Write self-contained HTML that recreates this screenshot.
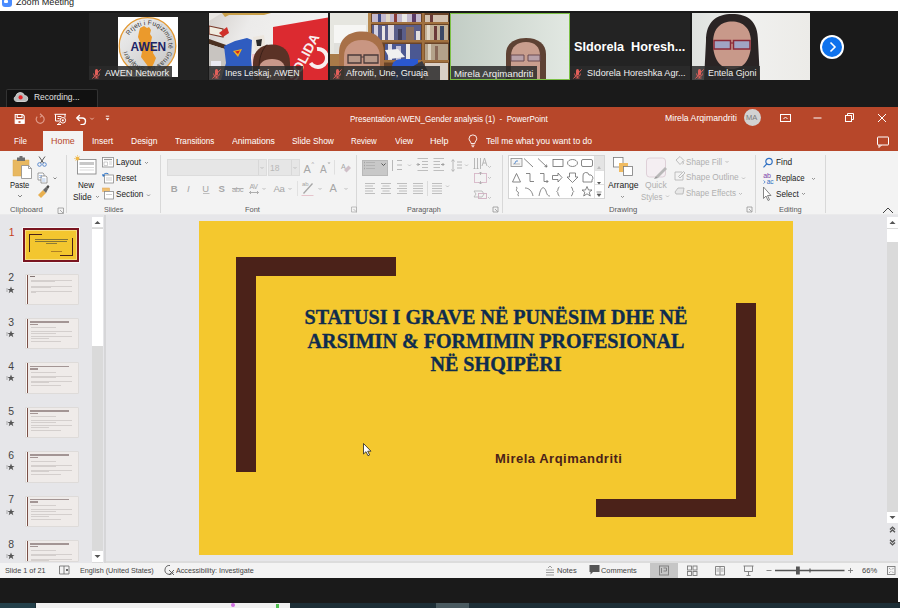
<!DOCTYPE html>
<html><head><meta charset="utf-8">
<style>
*{margin:0;padding:0;box-sizing:border-box}
html,body{width:900px;height:608px;overflow:hidden;background:#1a1a1a;font-family:"Liberation Sans",sans-serif}
.a{position:absolute}
.t{position:absolute;white-space:nowrap;line-height:1}
/* zoom */
#ztitle{left:0;top:0;width:900px;height:11px;background:#fff}
#zstrip{left:0;top:11px;width:898px;height:96px;background:#1a1a1a}
#rcol{left:898px;top:0;width:2px;height:602px;background:#fff}
.tile{position:absolute;top:13px;width:119px;height:67px;background:#232323;overflow:hidden}
.lbl{position:absolute;left:0;top:53px;height:14px;background:rgba(42,42,42,.85);color:#f0f0f0;font-size:9px;line-height:15.4px;padding-left:16px;white-space:nowrap}
.mic{position:absolute;left:2.5px;top:55.5px;width:9px;height:10px}
/* ppt */
#ptitle{left:0;top:107px;width:898px;height:44px;background:#b7472a}
#ribbon{left:0;top:151px;width:898px;height:64px;background:#f3f3f3;border-bottom:1.5px solid #eaeaeb}
#main{left:0;top:215px;width:898px;height:348px;background:#e6e6e9}
#status{left:0;top:563px;width:898px;height:15px;background:#f3f3f3}
.tab{position:absolute;top:137.6px;color:#fff;font-size:8.8px;letter-spacing:-0.3px;line-height:1;white-space:nowrap}
.rt{position:absolute;color:#222;font-size:9px;white-space:nowrap;line-height:1}
.dis{color:#a6a6a6}
.gl{position:absolute;color:#5a5a5a;font-size:8.5px;white-space:nowrap;line-height:1}
.sep{position:absolute;top:155px;width:1px;height:58px;background:#d8d8d8}
.st{position:absolute;top:567px;color:#444;font-size:8.5px;white-space:nowrap;line-height:1}
</style></head><body>
<!-- Zoom title -->
<div id="ztitle" class="a"></div>
<div id="zstrip" class="a"></div>
<div id="rcol" class="a"></div>

<!-- Zoom title content -->
<div class="a" style="left:2px;top:-3.3px;width:10.3px;height:10px;border-radius:3px;background:#4a8cff"></div>
<div class="a" style="left:4px;top:0px;width:4px;height:3px;background:#fff;border-radius:1px"></div>
<div class="t" style="left:16px;top:-1.7px;font-size:9.1px;color:#222">Zoom Meeting</div>

<!-- tile 1 AWEN -->
<div class="tile" style="left:89px">
  <svg class="a" style="left:29px;top:4px" width="60" height="60">
   <defs><linearGradient id="sg" x1="0" y1="0" x2="1" y2="1"><stop offset="0" stop-color="#f2f2f2"/><stop offset="0.6" stop-color="#d6d6d6"/><stop offset="1" stop-color="#c4c4c4"/></linearGradient>
   <path id="ring" d="M11.3 18.5 A21 21 0 1 1 47.7 39.5 A21 21 0 1 1 11.3 18.5"/></defs>
   <rect width="60" height="60" fill="#fff"/>
   <circle cx="29.5" cy="29" r="28.3" fill="url(#sg)" stroke="#e39a35" stroke-width="1.3"/>
   <path d="M22 11 L26 9 L29 11 L31 10 L33 13 L32 17 L34 20 L33 25 L36 30 L35 36 L38 41 L36 46 L34 50 L31 52 L29 48 L26 44 L23 40 L24 35 L21 30 L22 25 L20 20 L21 15Z" fill="#eb9a2c"/>
   <text font-size="6.6" fill="#333" font-family="Liberation Sans" letter-spacing="0.15"><textPath href="#ring" startOffset="0%">Rrjeti i Fuqizimit të Gruas në Shqipëri</textPath></text>
   <text x="12.5" y="33.5" font-size="11.9" font-weight="bold" fill="#1c2466" font-family="Liberation Sans">AWEN</text>
  </svg>
  <div class="lbl" style="width:83px;font-size:9.3px">AWEN Network</div><svg class="mic" width="9" height="10"><path d="M3 1.5 A1.5 1.5 0 0 1 6 1.5 V5 A1.5 1.5 0 0 1 3 5Z" fill="#e2605a"/><path d="M1.5 4.5 A3 3 0 0 0 7.5 4.5 M4.5 7.5 V9 M2.5 9 H6.5" fill="none" stroke="#e2605a" stroke-width="0.9"/><path d="M0.5 9.5 L8.5 0.5" stroke="#e2605a" stroke-width="1"/></svg>
</div>
<!-- tile 2 Ines -->
<div class="tile" style="left:209px;background:#e6e4e2">
  <svg class="a" style="left:0;top:0" width="119" height="67">
   <defs><linearGradient id="w2" x1="0" y1="0" x2="1" y2="0.3"><stop offset="0" stop-color="#d4d0cc"/><stop offset="0.35" stop-color="#ecebea"/><stop offset="1" stop-color="#f4f3f2"/></linearGradient></defs>
   <rect width="119" height="67" fill="url(#w2)"/>
   <path d="M13 0 H62 L55 2 H20 L16 4Z" fill="#c9a04a"/>
   <path d="M0 0 H13 L0 8Z" fill="#e8e6e2"/>
   <path d="M0 13 L14 16 V24 L0 21Z" fill="#f0ece0" stroke="#7a3a2a" stroke-width="1.2"/>
   <path d="M10 20 L18 14 L20 20 L14 24Z" fill="#d0302a"/>
   <path d="M0 26 L20 33 L22 38 L0 31Z" fill="#4a3020"/>
   <path d="M0 31 L22 38 V67 H0Z" fill="#c8c4c0"/>
   <path d="M2 48 H12 V55 H2Z" fill="#e8e8f0"/>
   <path d="M15 33 L26 28 L38 25 L43 27 L42 45 L44 67 H12 L17 50 Z" fill="#2f5cc0"/>
   <path d="M24 38 L33 36 L29 44Z" fill="#f0b020"/><path d="M26 38.5 L31 37.5 L29 41Z" fill="#d02020"/>
   <path d="M44 24 L55 22 L57 36 L46 38Z" fill="#ece6de"/><path d="M47 27 L53 26 L52 33 L48 33Z" fill="#2a2a2a"/>
   <rect x="43" y="41" width="9" height="14" fill="#f4c8cc"/>
   <path d="M64 14 L119 4.5 V67 H64Z" fill="#dc2a30"/>
   <g transform="translate(87 69) rotate(-62)" fill="#f8eeee" font-family="Liberation Sans" font-weight="bold" font-size="13.5"><text x="0" y="0">SOLIDA</text></g>
   <path d="M108 36 A9 9 0 1 1 101.5 50" fill="none" stroke="#f8eeee" stroke-width="4"/>
   <path d="M44 67 V50 C44 38 52 31.5 63 31.5 C74 31.5 81 38 81 50 V67Z" fill="#5a3226"/>
   <path d="M50 67 V56 C50 50 55 46 63 46 C71 46 76 50 76 56 V67Z" fill="#c8988a"/>
   <path d="M58 31.5 C52 38 50 46 50 56" fill="none" stroke="#3a2018" stroke-width="1"/>
  </svg>
  <div class="lbl" style="width:94px;font-size:8.75px">Ines Leskaj, AWEN</div><svg class="mic" width="9" height="10"><path d="M3 1.5 A1.5 1.5 0 0 1 6 1.5 V5 A1.5 1.5 0 0 1 3 5Z" fill="#e2605a"/><path d="M1.5 4.5 A3 3 0 0 0 7.5 4.5 M4.5 7.5 V9 M2.5 9 H6.5" fill="none" stroke="#e2605a" stroke-width="0.9"/><path d="M0.5 9.5 L8.5 0.5" stroke="#e2605a" stroke-width="1"/></svg>
</div>
<!-- tile 3 Afroviti -->
<div class="tile" style="left:330px;background:#7a5a3a">
  <svg class="a" style="left:0;top:0" width="119" height="67">
   <rect width="119" height="67" fill="#8a5a34"/>
   <rect x="0" y="0" width="40" height="67" fill="#e6e6e0"/>
   <rect x="4" y="12" width="32" height="28" fill="#f6f6f4"/><rect x="4" y="30" width="8" height="10" fill="#e0e0dc"/>
   <rect x="0" y="41" width="40" height="12" fill="#a87a48"/><rect x="0" y="53" width="40" height="14" fill="#9a8a70"/>
   <rect x="40" y="0" width="79" height="67" fill="#6a4428"/>
   <rect x="40" y="9" width="79" height="2" fill="#a0703e"/><rect x="40" y="27" width="79" height="2.5" fill="#a0703e"/><rect x="40" y="47" width="79" height="2.5" fill="#a0703e"/>
   <rect x="92" y="0" width="2.5" height="67" fill="#a0703e"/><rect x="38" y="0" width="3" height="67" fill="#b88a50"/>
   <g opacity="0.95">
    <rect x="42" y="1" width="49" height="8" fill="#c8c0d8"/><rect x="48" y="1" width="3" height="8" fill="#3a4a8a"/><rect x="56" y="1" width="4" height="8" fill="#e8e0d0"/><rect x="64" y="1" width="3" height="8" fill="#8a3a3a"/><rect x="72" y="1" width="5" height="8" fill="#f0f0f0"/><rect x="82" y="1" width="4" height="8" fill="#5a3a6a"/>
    <rect x="95" y="2" width="23" height="7" fill="#d8c8b8"/><rect x="100" y="2" width="3" height="7" fill="#6a3a3a"/>
    <rect x="42" y="12" width="49" height="15" fill="#5a6090"/><rect x="44" y="12" width="4" height="15" fill="#d8d8ea"/><rect x="52" y="13" width="3" height="14" fill="#f0eeee"/><rect x="58" y="12" width="6" height="15" fill="#e6e0e8"/><rect x="68" y="16" width="4" height="11" fill="#3a3a5a"/><rect x="76" y="14" width="8" height="13" fill="#8a7060"/><rect x="86" y="18" width="4" height="9" fill="#e8e8e8"/>
    <rect x="95" y="12" width="23" height="15" fill="#c8b8a0"/><rect x="97" y="12" width="3" height="15" fill="#e8e0d0"/><rect x="104" y="13" width="3" height="14" fill="#6a3a3a"/><rect x="110" y="13" width="4" height="14" fill="#3a4a6a"/>
    <rect x="55" y="31" width="36" height="16" fill="#4a5a98"/><rect x="58" y="31" width="4" height="16" fill="#e0e0f0"/><rect x="66" y="33" width="5" height="14" fill="#c8c8e0"/><rect x="76" y="31" width="4" height="16" fill="#f0f0f0"/>
    <rect x="95" y="31" width="23" height="16" fill="#b8a890"/><rect x="98" y="31" width="3" height="16" fill="#e0d8c8"/><rect x="105" y="33" width="3" height="14" fill="#8a6a5a"/>
    <rect x="95" y="50" width="23" height="17" fill="#e0d8d0"/>
   </g>
   <path d="M62 67 V54 C62 49 66 46 72 46 H88 V67Z" fill="#2a58d0"/>
   <path d="M80 55 L92 48 L98 58 L90 67 H80Z" fill="#3a3a40"/>
   <path d="M55 37 L68 36 L75 44 L60 46Z" fill="#f0f0f0"/>
   <path d="M9 67 V40 C9 26 18 18.5 32 18.5 C46 18.5 54 26 54 40 V58 L50 67Z" fill="#a87048"/>
   <path d="M14 67 V44 C14 33 21 27 32 27 C43 27 50 33 50 44 V67Z" fill="#c99682"/>
   <path d="M18 42 H31 V50 H18Z M34 42 H48 V50 H34Z" fill="#b89888" stroke="#4a3a3a" stroke-width="1.3"/><path d="M31 44 H34" stroke="#4a3a3a" stroke-width="1"/>
  </svg>
  <div class="lbl" style="width:110px;font-size:9.15px">Afroviti, Une, Gruaja</div><svg class="mic" width="9" height="10"><path d="M3 1.5 A1.5 1.5 0 0 1 6 1.5 V5 A1.5 1.5 0 0 1 3 5Z" fill="#e2605a"/><path d="M1.5 4.5 A3 3 0 0 0 7.5 4.5 M4.5 7.5 V9 M2.5 9 H6.5" fill="none" stroke="#e2605a" stroke-width="0.9"/><path d="M0.5 9.5 L8.5 0.5" stroke="#e2605a" stroke-width="1"/></svg>
</div>
<!-- tile 4 Mirela -->
<div class="tile" style="left:450px;width:120px;background:#cfd8d0;border:1px solid #7cc146">
  <svg class="a" style="left:0;top:0" width="118" height="65">
   <defs><linearGradient id="w4" x1="0" y1="0" x2="1" y2="0"><stop offset="0" stop-color="#c2cdc5"/><stop offset="0.55" stop-color="#d4dcd5"/><stop offset="1" stop-color="#e2e8e2"/></linearGradient></defs>
   <rect width="118" height="65" fill="url(#w4)"/>
   <path d="M55 65 V40 C55 30 63 24 75 24 C87 24 95 30 95 40 V65Z" fill="#5e4234"/>
   <path d="M60 65 V42 C60 33 66 28 75 28 C84 28 89 33 89 42 V65Z" fill="#c99e8e"/>
   <path d="M60 41 H73 V47 H60Z M77 41 H89 V47 H77Z" fill="#b8a0a8" stroke="#6a4a50" stroke-width="1"/>
  </svg>
  <div class="lbl" style="width:86px;padding-left:3px;top:52px;font-size:9.6px">Mirela Arqimandriti</div>
</div>
<!-- tile 5 Sidorela -->
<div class="tile" style="left:570px;width:120px">
  <div class="t" style="left:4px;top:27.5px;font-size:12.7px;font-weight:bold;color:#fff">SIdorela&nbsp; Horesh...</div>
  <div class="lbl" style="width:120px;background:#2a2a2a;padding-left:17px;font-size:9.1px">SIdorela Horeshka Agr...</div><svg class="mic" width="9" height="10"><path d="M3 1.5 A1.5 1.5 0 0 1 6 1.5 V5 A1.5 1.5 0 0 1 3 5Z" fill="#e2605a"/><path d="M1.5 4.5 A3 3 0 0 0 7.5 4.5 M4.5 7.5 V9 M2.5 9 H6.5" fill="none" stroke="#e2605a" stroke-width="0.9"/><path d="M0.5 9.5 L8.5 0.5" stroke="#e2605a" stroke-width="1"/></svg>
</div>
<!-- tile 6 Entela -->
<div class="tile" style="left:692px;width:118px;background:#eeeeec">
  <svg class="a" style="left:0;top:0" width="118" height="67">
   <defs><linearGradient id="w6" x1="0" y1="0" x2="1" y2="0"><stop offset="0" stop-color="#dfe2df"/><stop offset="0.5" stop-color="#f0f0ee"/><stop offset="1" stop-color="#ecebe8"/></linearGradient></defs>
   <rect width="118" height="67" fill="url(#w6)"/>
   <path d="M12 67 L14 28 C14 8 25 1 40 1 C56 1 66 8 66 28 L68 67Z" fill="#2a2424"/>
   <path d="M21 30 C21 15 29 8.5 40 8.5 C51 8.5 59 15 59 30 C59 47 51 56 40 56 C29 56 21 47 21 30Z" fill="#c8998a"/>
   <path d="M22 27.5 H38.5 V36 H22Z M41.5 27.5 H58 V36 H41.5Z" fill="#a0a4c4" stroke="#8a2a38" stroke-width="1.5"/><path d="M38.5 30 H41.5" stroke="#8a2a38" stroke-width="1.2"/>
   <path d="M28 67 C32 62 48 62 60 67Z" fill="#3a4a8a"/>
  </svg>
  <div class="lbl" style="width:68px;font-size:8.9px">Entela Gjoni</div><svg class="mic" width="9" height="10"><path d="M3 1.5 A1.5 1.5 0 0 1 6 1.5 V5 A1.5 1.5 0 0 1 3 5Z" fill="#e2605a"/><path d="M1.5 4.5 A3 3 0 0 0 7.5 4.5 M4.5 7.5 V9 M2.5 9 H6.5" fill="none" stroke="#e2605a" stroke-width="0.9"/><path d="M0.5 9.5 L8.5 0.5" stroke="#e2605a" stroke-width="1"/></svg>
</div>
<!-- next arrow -->
<div class="a" style="left:820px;top:35px;width:24px;height:24px;border-radius:50%;background:#fff"></div>
<div class="a" style="left:822px;top:37px;width:20px;height:20px;border-radius:50%;background:#0e72ed"></div>
<svg class="a" style="left:820px;top:35px" width="24" height="24"><path d="M10.5 7.5 L15 12 L10.5 16.5" fill="none" stroke="#fff" stroke-width="1.6"/></svg>

<!-- recording -->
<div class="a" style="left:6px;top:88.5px;width:92px;height:19px;background:#111;border:1px solid #333;border-bottom:none;border-radius:2px 2px 0 0"></div>
<svg class="a" style="left:13px;top:91px" width="16" height="12"><path d="M3.5 10.5 A2.8 2.8 0 0 1 2.8 5.2 A4.6 4.6 0 0 1 11.6 4.6 A3 3 0 0 1 12.5 10.5Z" fill="#b8bcbc" stroke="#d0d0d0" stroke-width="1"/><circle cx="7.6" cy="6.4" r="2.1" fill="#e8252a"/></svg>
<div class="t" style="left:34.3px;top:92.6px;font-size:9.2px;transform:scaleX(0.92);transform-origin:0 0;color:#e0e0e0">Recording...</div>


<!-- PowerPoint title bar -->
<div id="ptitle" class="a"></div>
<div id="ribbon" class="a"></div>
<div id="main" class="a"></div>
<div id="status" class="a"></div>

<!-- QAT -->
<svg class="a" style="left:13px;top:113px" width="100" height="12">
 <g fill="none" stroke="#fff" stroke-width="1.1">
  <path d="M2.2 1.5 H9.8 L11.2 2.9 V10.2 H2.2 Z"/><path d="M4.2 1.5 V4.5 H9 V1.5"/>
 </g>
 <path d="M2.2 6.3 H11.2 V10.8 H2.2Z" fill="#fff"/><rect x="5.5" y="8.2" width="2" height="1.6" fill="#b7472a"/>
 <g fill="none" stroke="#e09a88" stroke-width="1.2"><path d="M28.5 2.5 A4 4 0 1 1 24.2 3.6"/><path d="M27 0.8 L29 2.6 L27 4.4"/></g>
 <g fill="none" stroke="#fff" stroke-width="1"><path d="M41.5 1.3 H53"/><path d="M42.5 1.3 V8 H46.5"/><path d="M52 1.3 V4.5"/><circle cx="49.8" cy="7.3" r="2.8"/><path d="M45 11.5 L46.8 9.3 M44 11.5 H48"/><path d="M44.5 3.5 H48.5 M44.5 5.5 H46.5"/></g>
 <circle cx="49.8" cy="7.3" r="1.1" fill="#fff"/>
 <g fill="none" stroke="#fff" stroke-width="1.4"><path d="M64.5 5 H69.2 A3.3 3.3 0 0 1 69.2 11.6 H67.5"/><path d="M66.8 2 L63.8 5 L66.8 8"/></g>
 <path d="M77.3 4.8 L79 6.5 L80.7 4.8" fill="none" stroke="#f0c0b0" stroke-width="0.9"/>
 <path d="M92.8 3.2 H96.2" stroke="#fff" stroke-width="0.9"/><path d="M92.6 5.2 L94.5 7.6 L96.4 5.2 Z" fill="#fff"/>
</svg>
<div class="t" style="left:350px;top:115.0px;font-size:8.9px;transform:scaleX(0.904);transform-origin:0 0;color:#fff">Presentation AWEN_Gender analysis (1)&nbsp; -&nbsp; PowerPoint</div>
<div class="t" style="left:665.4px;top:113.5px;font-size:8.9px;transform:scaleX(0.979);transform-origin:0 0;color:#fff">Mirela Arqimandriti</div>
<div class="a" style="left:744px;top:109px;width:17px;height:17px;border-radius:50%;background:#d2d2d2"></div>
<div class="t" style="left:746px;top:114px;font-size:7.5px;color:#7a7a7a">MA</div>
<svg class="a" style="left:775px;top:110px" width="120" height="40">
 <g fill="none" stroke="#fff" stroke-width="1">
  <rect x="5.5" y="4.5" width="10" height="7"/><path d="M8.5 9 L10.5 7 L12.5 9" />
  <path d="M38.5 8 H46.5"/>
  <rect x="70.5" y="5.5" width="6" height="6"/><path d="M72.5 5.5 V3.5 H78.5 V9.5 H76.5"/>
  <path d="M103 4 L111 12 M111 4 L103 12"/>
  <rect x="102.5" y="27" width="11" height="8" rx="0.5"/><path d="M104 35 V37.5 L106.5 35"/>
 </g>
</svg>
<!-- tabs -->
<div class="a" style="left:43px;top:131px;width:40px;height:20px;background:#f3f3f3"></div>
<div class="tab" style="left:14.0px;top:136.8px;font-size:9.2px;letter-spacing:0;transform:scaleX(0.873);transform-origin:0 0">File</div>
<div class="tab" style="left:50.8px;top:136.8px;font-size:9.2px;letter-spacing:0;transform:scaleX(0.969);transform-origin:0 0;color:#b7472a">Home</div>
<div class="tab" style="left:92.0px;top:136.8px;font-size:9.2px;letter-spacing:0;transform:scaleX(0.923);transform-origin:0 0">Insert</div>
<div class="tab" style="left:130.8px;top:136.8px;font-size:9.2px;letter-spacing:0;transform:scaleX(0.925);transform-origin:0 0">Design</div>
<div class="tab" style="left:174.5px;top:136.8px;font-size:9.2px;letter-spacing:0;transform:scaleX(0.884);transform-origin:0 0">Transitions</div>
<div class="tab" style="left:231.5px;top:136.8px;font-size:9.2px;letter-spacing:0;transform:scaleX(0.945);transform-origin:0 0">Animations</div>
<div class="tab" style="left:292.0px;top:136.8px;font-size:9.2px;letter-spacing:0;transform:scaleX(0.912);transform-origin:0 0">Slide Show</div>
<div class="tab" style="left:351.2px;top:136.8px;font-size:9.2px;letter-spacing:0;transform:scaleX(0.851);transform-origin:0 0">Review</div>
<div class="tab" style="left:394.5px;top:136.8px;font-size:9.2px;letter-spacing:0;transform:scaleX(0.922);transform-origin:0 0">View</div>
<div class="tab" style="left:430.0px;top:136.8px;font-size:9.2px;letter-spacing:0;transform:scaleX(0.979);transform-origin:0 0">Help</div>
<svg class="a" style="left:467px;top:134px" width="12" height="14"><g fill="none" stroke="#fff" stroke-width="0.9"><path d="M4 9.5 C4 7.5 2 6.5 2 4.8 A3.9 3.9 0 0 1 9.8 4.8 C9.8 6.5 7.8 7.5 7.8 9.5 Z"/><path d="M4.3 11.2 H7.5 M4.8 12.7 H7"/></g></svg>
<div class="tab" style="left:485.8px;top:136.8px;font-size:9.2px;letter-spacing:0;transform:scaleX(0.936);transform-origin:0 0">Tell me what you want to do</div>



<!-- RIBBON -->
<div class="sep" style="left:66px"></div>
<div class="sep" style="left:160px"></div>
<div class="sep" style="left:356px"></div>
<div class="sep" style="left:502px"></div>
<div class="sep" style="left:755px"></div>
<div class="sep" style="left:825px"></div>
<!-- clipboard -->
<svg class="a" style="left:10px;top:155px" width="56" height="50">
 <path d="M3 5 H19 V21 H3 Z" fill="#e8b860" stroke="#d9a850" stroke-width="0.5"/>
 <path d="M7 2.5 H15 V6 H7 Z" fill="#6e6e6e"/><path d="M9.5 1 H12.5 V3 H9.5Z" fill="#6e6e6e"/>
 <path d="M11.5 10.5 H18.5 L21.5 13.5 V23.5 H11.5 Z" fill="#fff" stroke="#8a8a8a" stroke-width="0.8"/>
 <path d="M18.5 10.5 V13.5 H21.5" fill="none" stroke="#8a8a8a" stroke-width="0.8"/>
 <path d="M8 40 L10 42 L12 40" fill="none" stroke="#6a6a6a" stroke-width="0.8"/>
 <!-- cut -->
 <g fill="none" stroke="#5b8bd0" stroke-width="1"><circle cx="29.5" cy="9.5" r="1.8"/><circle cx="34.5" cy="9.5" r="1.8"/></g>
 <path d="M30.5 8 L35 1.5 M33.5 8 L29 1.5" stroke="#4a4a4a" stroke-width="0.9"/>
 <!-- copy -->
 <path d="M28 18 H33 L34 19 V25 H28Z" fill="#fff" stroke="#7a7a7a" stroke-width="0.7"/>
 <path d="M31 21 H36 L37 22 V28 H31Z" fill="#fff" stroke="#7a7a7a" stroke-width="0.7"/>
 <path d="M29 20.5 H32 M29 22.5 H32 M32 24 H35.5 M32 26 H35.5" stroke="#5b8bd0" stroke-width="0.5"/>
 <path d="M43.5 22.5 L45 24 L46.5 22.5" fill="none" stroke="#6a6a6a" stroke-width="0.8"/>
 <!-- format painter -->
 <path d="M28 40 L33 35 L36 38 L31 43 Z" fill="#e8b050"/><path d="M33 35 L36 32 L38 34 L36 38Z" fill="#6a6a6a"/><path d="M36 32 L38 30 L39.5 31.5 L38 34Z" fill="#4a4a4a"/>
</svg>
<div class="rt" style="left:10.2px;top:181.3px;font-size:8.5px;transform:scaleX(0.888);transform-origin:0 0">Paste</div>
<div class="gl" style="left:10.4px;top:206.2px;font-size:8.1px;transform:scaleX(0.948);transform-origin:0 0">Clipboard</div>
<svg class="a" style="left:57px;top:207px" width="8" height="8"><path d="M1 1 H6.5 V6.5 H1Z M3 3 L6 6" fill="none" stroke="#8a8a8a" stroke-width="0.7"/></svg>
<!-- slides -->
<svg class="a" style="left:74px;top:155px" width="84" height="48">
 <rect x="3.5" y="4.5" width="18.5" height="14.5" fill="#fff" stroke="#8a8a8a" stroke-width="0.9"/>
 <rect x="5.5" y="7" width="14.5" height="3" fill="#c8c8c8"/><path d="M5.5 12.5 H20 M5.5 15 H20" stroke="#d0d0d0" stroke-width="0.8"/>
 <circle cx="3.5" cy="3.5" r="2" fill="#f0b848"/><path d="M3.5 0 V1 M0 3.5 H1 M1 1 L1.7 1.7 M6 1 L5.3 1.7 M1 6 L1.7 5.3" stroke="#f0b848" stroke-width="0.6"/>
 <path d="M22 41 L23.5 42.5 L25 41" fill="none" stroke="#6a6a6a" stroke-width="0.7"/>
 <!-- layout -->
 <rect x="28.5" y="2.5" width="11" height="9.5" fill="#fff" stroke="#8a8a8a" stroke-width="0.8"/><path d="M30 4.5 H38" stroke="#9a9a9a" stroke-width="1.2"/><path d="M30 7 H33.5 V10.5 H30Z M35 7 H38 M35 9 H38" fill="none" stroke="#b0b0b0" stroke-width="0.6"/>
 <path d="M71 7 L72.5 8.5 L74 7" fill="none" stroke="#6a6a6a" stroke-width="0.7"/>
 <!-- reset -->
 <rect x="30.5" y="20" width="9" height="8" fill="#fff" stroke="#8a8a8a" stroke-width="0.8"/><path d="M32 23 H38 M32 25 H38" stroke="#b0b0b0" stroke-width="0.6"/>
 <path d="M29 21 A3.5 3.5 0 0 1 34.5 19" fill="none" stroke="#2e75c8" stroke-width="1"/><path d="M28 19 L29 22 L31 20.5Z" fill="#2e75c8"/>
 <!-- section -->
 <rect x="28.5" y="33" width="7" height="3.5" fill="#f0c070" stroke="#e0a050" stroke-width="0.5"/>
 <rect x="30.5" y="36.5" width="9" height="7.5" fill="#fff" stroke="#8a8a8a" stroke-width="0.8"/><path d="M32 39.5 H38" stroke="#b0b0b0" stroke-width="0.6"/>
 <path d="M73 39.5 L74.5 41 L76 39.5" fill="none" stroke="#6a6a6a" stroke-width="0.7"/>
</svg>
<div class="rt" style="left:78.3px;top:181.4px;font-size:8.5px;transform:scaleX(0.950);transform-origin:0 0">New</div>
<div class="rt" style="left:73.3px;top:192.6px;font-size:8.5px;transform:scaleX(0.983);transform-origin:0 0">Slide</div>
<div class="rt" style="left:115.9px;top:157.9px;font-size:8.5px;transform:scaleX(0.983);transform-origin:0 0">Layout</div>
<div class="rt" style="left:115.9px;top:174.0px;font-size:8.5px;transform:scaleX(0.916);transform-origin:0 0">Reset</div>
<div class="rt" style="left:115.9px;top:190.4px;font-size:8.5px;transform:scaleX(0.965);transform-origin:0 0">Section</div>
<div class="gl" style="left:103.6px;top:206.2px;font-size:8.1px;transform:scaleX(0.875);transform-origin:0 0">Slides</div>
<!-- font -->
<div class="a" style="left:167px;top:159px;width:100px;height:17px;background:#e6e6e6;border:1px solid #dcdcdc"></div>
<div class="a" style="left:258px;top:160px;width:1px;height:15px;background:#d8d8d8"></div>
<div class="a" style="left:268px;top:159px;width:32px;height:17px;background:#e6e6e6;border:1px solid #dcdcdc"></div>
<div class="a" style="left:291px;top:160px;width:1px;height:15px;background:#d8d8d8"></div>
<div class="t dis" style="left:270px;top:164px;font-size:8.5px;color:#b8b8b8">18</div>
<svg class="a" style="left:160px;top:155px" width="200" height="60">
 <g fill="none" stroke="#b0b0b0" stroke-width="0.7"><path d="M100.5 12 L102 13.5 L103.5 12 M133.5 12 L135 13.5 L136.5 12"/></g>
 <g fill="#a6a6a6" font-family="Liberation Sans">
  <text x="143.5" y="17.5" font-size="11">A</text><text x="151.5" y="11" font-size="5.5">^</text>
  <text x="160" y="17.5" font-size="10">A</text><path d="M167.5 7.5 L169 9 L170.5 7.5Z"/>
  <text x="10.8" y="36.6" font-size="9.6" font-weight="bold">B</text>
  <text x="27" y="36.6" font-size="9.6" font-style="italic">I</text>
  <text x="42.3" y="36.6" font-size="9.4">U</text>
  <text x="58.5" y="36.6" font-size="9.6" font-weight="bold">S</text>
  <text x="72" y="36.6" font-size="7.6" letter-spacing="-0.4">abc</text>
  <text x="89.4" y="34.3" font-size="7" letter-spacing="-0.3">AV</text>
  <text x="113.5" y="36.6" font-size="9.6" letter-spacing="-0.3">Aa</text>
  <text x="169.5" y="37" font-size="11">A</text>
  <text x="181" y="14" font-size="7">A</text>
 </g>
 <g fill="none" stroke="#a6a6a6" stroke-width="0.7">
  <path d="M43 38.5 H49.5"/><path d="M72 33.5 H83.5"/><path d="M89.5 37.5 H98.5 M91 36 L89.5 37.5 L91 39 M97 36 L98.5 37.5 L97 39" stroke-width="0.9"/>
  <path d="M102.5 33 L104 34.5 L105.5 33 M128.5 33 L130 34.5 L131.5 33 M158.5 33 L160 34.5 L161.5 33 M184.5 33 L186 34.5 L187.5 33"/>
  <path d="M143.5 38.5 L152.5 28.5" stroke-width="1.3"/><path d="M141.5 40.5 H153.5" stroke="#e6c4cc" stroke-width="1"/>
  <path d="M174.5 5 V19.5" stroke="#d6d6d6"/><path d="M137.5 26 V41" stroke="#d8d8d8"/>
  <path d="M191.5 52 H196.5 V57 H191.5Z M193.5 54 L196 56.5"/>
 </g>
 <path d="M184 15 L188.5 10.5 L191 13 L186.5 17.5Z" fill="#d0c0c8"/>
 <text x="142" y="31" font-size="6" fill="#a6a6a6" font-family="Liberation Sans">ab</text>
</svg>
<div class="gl" style="left:245.3px;top:206.2px;font-size:8.1px;transform:scaleX(0.922);transform-origin:0 0">Font</div>
<!-- paragraph -->
<div class="a" style="left:362px;top:160px;width:26px;height:16px;background:#c8c8c8;border:1px solid #b8b8b8"></div>
<svg class="a" style="left:356px;top:155px" width="146" height="60">
 <g fill="none" stroke="#a0a0a0" stroke-width="0.9">
  <path d="M10 7.5 H19 M10 10.5 H19 M10 13.5 H19" stroke="#b0b0b0"/>
  <path d="M8 7.5 H8.8 M8 10.5 H8.8 M8 13.5 H8.8" stroke="#9a9a9a" stroke-width="1.5"/>
  <path d="M25.5 8.5 L27.5 10.5 L29.5 8.5" stroke="#555" stroke-width="1"/>
  <path d="M41 5.5 H46 M41 10 H46 M41 14.5 H46 M36.5 5 V16" stroke="#b0b0b0"/>
  <path d="M52 9.5 L53.5 11 L55 9.5 M109 9.5 L110.5 11 L112 9.5 M132 11 L133.5 12.5 L135 11 M132 22 L133.5 23.5 L135 22 M132 42 L133.5 43.5 L135 42 M90 30.5 L91.5 32 L93 30.5" stroke="#b0b0b0" stroke-width="0.7"/>
  <path d="M61.5 3.5 H72 M66 6.5 H72 M66 9.5 H72 M66 12.5 H72 M61.5 15.5 H72" stroke="#b8b8b8"/>
  <path d="M64 9.5 H61.5 M62.5 8 L61 9.5 L62.5 11" stroke="#999"/>
  <path d="M77.5 3.5 H88 M77.5 6.5 H84 M77.5 9.5 H84 M77.5 12.5 H84 M77.5 15.5 H88" stroke="#b8b8b8"/>
  <path d="M85 9.5 H88 M86.5 8 L88 9.5 L86.5 11" stroke="#999"/>
  <path d="M97 5 V16 M95.5 6.5 L97 4.5 L98.5 6.5 M95.5 14.5 L97 16.5 L98.5 14.5 M101 7 H106 M101 10 H106 M101 13 H106" stroke="#b0b0b0"/>
  <path d="M118.5 3 V14 M121.5 3 V14 M124.5 3 V14 M117.5 13 L118.5 14 L119.5 13 M120.5 13 L121.5 14 L122.5 13" stroke="#a8a8a8" stroke-width="0.8"/>
  <path d="M126 11 L128.5 3 L131 11 M127 8 H130" stroke="#a8a8a8" stroke-width="0.8"/>
  <rect x="118.5" y="18.5" width="12" height="9" stroke="#d8b8c8"/><path d="M124.5 17 V20 M123 18.5 L124.5 17 L126 18.5 M124.5 29 V26 M123 27.5 L124.5 29 L126 27.5" stroke="#a8a8a8" stroke-width="0.8"/>
  <path d="M118 36 H126 L128 39 L126 42 H118 L120 39Z" stroke="#b8b8b8"/><rect x="122.5" y="38.5" width="8" height="5" stroke="#d0b0c0"/>
  <path d="M9 28.5 H19 M9 31 H17 M9 33.5 H19 M9 36 H17 M9 38.5 H19" stroke="#b8b8b8"/>
  <path d="M25 28.5 H35 M26.5 31 H33.5 M25 33.5 H35 M26.5 36 H33.5 M25 38.5 H35" stroke="#b8b8b8"/>
  <path d="M41 28.5 H51 M43 31 H51 M41 33.5 H51 M43 36 H51 M41 38.5 H51" stroke="#b8b8b8"/>
  <path d="M57 28.5 H67 M57 31 H67 M57 33.5 H67 M57 36 H67 M57 38.5 H67" stroke="#b8b8b8"/>
  <path d="M71.5 26 V41" stroke="#d8d8d8"/>
  <path d="M76 28.5 H86 M76 31 H86 M76 33.5 H86 M76 36 H86 M76 38.5 H86" stroke="#b8b8b8"/>
  <path d="M137 52 H142 V57 H137Z M139 54 L141.5 56.5" stroke="#8a8a8a" stroke-width="0.7"/>
 </g>
</svg>
<div class="gl" style="left:406.8px;top:206.2px;font-size:8.1px;transform:scaleX(0.892);transform-origin:0 0">Paragraph</div>
<!-- drawing -->
<div class="a" style="left:508px;top:155px;width:97px;height:44px;background:#fff;border:1px solid #d4d4d4"></div>
<div class="a" style="left:594px;top:156px;width:10px;height:14px;background:#e4e4e4"></div>
<div class="a" style="left:594px;top:156px;width:1px;height:42px;background:#e0e0e0"></div>
<div class="a" style="left:594px;top:170px;width:10px;height:1px;background:#e0e0e0"></div>
<div class="a" style="left:594px;top:184px;width:10px;height:1px;background:#e0e0e0"></div>
<svg class="a" style="left:508px;top:155px" width="100" height="44">
 <g fill="none" stroke="#6a6a6a" stroke-width="0.8">
  <rect x="3" y="3.5" width="11" height="8" stroke="#8a8a8a" fill="#f4f4f4"/><path d="M5 9 H12" stroke="#aaa"/>
  <path d="M16 3.5 L25 12"/><path d="M30 3.5 L39 12 M36.5 11.5 L39 12 L38.5 9.5"/>
  <rect x="45" y="4.5" width="10" height="7"/><ellipse cx="64.5" cy="8" rx="5" ry="3.5"/><rect x="73.5" y="4.5" width="11" height="7" rx="1.5"/>
  <path d="M8.5 18.5 L12.5 27 H4.5 Z"/><path d="M18 18.5 H22 V26.5 H26"/><path d="M32 18.5 H36 V26.5 H40 M38.5 25 L40 26.5 L38.5 28"/>
  <path d="M44.5 20.5 H50 V18 L54 22.5 L50 27 V24.5 H44.5Z"/><path d="M61.5 18 H67.5 V22 H70 L64.5 27.5 L59 22 H61.5Z"/>
  <path d="M75 27 V21 A3 3 0 0 1 81 20 A3 3 0 0 1 84 25 V27Z"/>
  <path d="M8 32 C11 33 6 35 10 37 C12 38 8 40 11 41"/><path d="M17 33 C21 33 24 36 25 41"/><path d="M31 41 C33 31 36 31 38 36 C39 40 40 41 42 41"/>
  <path d="M51.5 32 C49.5 32 50.5 36 48.8 36.5 C50.5 37 49.5 41 51.5 41"/><path d="M63 32 C65 32 64 36 65.7 36.5 C64 37 65 41 63 41"/>
  <path d="M79 31.5 L80.5 35 L84 35 L81.2 37.2 L82.3 41 L79 38.8 L75.7 41 L76.8 37.2 L74 35 L77.5 35Z"/>
 </g>
 <path d="M89 14 L91 11 L93 14Z" fill="#bdbdbd"/><path d="M89 27 L91 29.5 L93 27Z" fill="#555"/><path d="M88.5 37 H93.5 M89 39 L91 41.5 L93 39Z" fill="#555" stroke="#555" stroke-width="0.6"/>
 <path d="M10 6 H8 L6.5 9" stroke="#3a78c8" stroke-width="0.8" fill="none"/>
</svg>
<svg class="a" style="left:608px;top:155px" width="146" height="60">
 <rect x="5.5" y="2.5" width="9.5" height="9.5" fill="#fff" stroke="#7a7a7a" stroke-width="0.8"/>
 <rect x="11" y="8" width="9" height="9" fill="#f0bb60"/>
 <rect x="15.5" y="11.5" width="9" height="9" fill="#fff" stroke="#7a7a7a" stroke-width="0.8"/>
 <path d="M13 41 L14.5 42.5 L16 41" fill="none" stroke="#6a6a6a" stroke-width="0.7"/>
 <!-- quick styles -->
 <rect x="38.5" y="3" width="19" height="19" rx="3" fill="#f4eef2" stroke="#d8c8d0" stroke-width="0.8"/>
 <path d="M48 21 L57 12 L59 14 L50 23Z" fill="#b8b8b8"/><path d="M48 21 L46 24 L50 23Z" fill="#9a9a9a"/>
 <path d="M58 40.5 L59.5 42 L61 40.5" fill="none" stroke="#b0b0b0" stroke-width="0.7"/>
 <!-- shape fill etc -->
 <g fill="none" stroke="#b0b0b0" stroke-width="0.8">
  <path d="M68 5 L72 1.5 L76 5.5 L72 9.5Z"/><path d="M74.5 6 C76 8 75.5 9.5 74.5 9"/>
  <path d="M67 17 H74 M67 17 V25 H75 V20 M72 23 L77 18 L75.5 16.5 L70.5 21.5Z"/>
  <path d="M67 37 L70 33 H76 L75 39 H68Z" fill="#e8e8e8"/>
  <path d="M117.5 6 L119 7.5 L120.5 6 M134 22.5 L135.5 24 L137 22.5 M131 38 L132.5 39.5 L134 38"/>
  <path d="M139 52 H144 V57 H139Z M141 54 L143.5 56.5" stroke="#8a8a8a" stroke-width="0.7"/>
 </g>
</svg>
<div class="rt" style="left:607.5px;top:181.0px;font-size:8.5px;transform:scaleX(1.012);transform-origin:0 0">Arrange</div>
<div class="gl" style="left:608.9px;top:206.2px;font-size:8.1px;transform:scaleX(0.951);transform-origin:0 0">Drawing</div>
<div class="rt dis" style="left:644.8px;top:181.0px;font-size:8.5px;transform:scaleX(1.003);transform-origin:0 0;color:#b0b0b0">Quick</div>
<div class="rt dis" style="left:640.5px;top:192.6px;font-size:8.5px;transform:scaleX(0.926);transform-origin:0 0;color:#b0b0b0">Styles</div>
<div class="rt dis" style="left:686.3px;top:157.9px;font-size:8.5px;transform:scaleX(0.954);transform-origin:0 0;color:#b0b0b0">Shape Fill</div>
<div class="rt dis" style="left:686.3px;top:173.4px;font-size:8.5px;transform:scaleX(0.978);transform-origin:0 0;color:#b0b0b0">Shape Outline</div>
<div class="rt dis" style="left:686.3px;top:189.4px;font-size:8.5px;transform:scaleX(0.947);transform-origin:0 0;color:#b0b0b0">Shape Effects</div>
<!-- editing -->
<svg class="a" style="left:760px;top:155px" width="70" height="60">
 <g fill="none" stroke="#2e6fc2" stroke-width="1.2"><circle cx="9" cy="6.5" r="3.2"/><path d="M6.8 8.8 L3.5 12.3"/></g>
 <text x="3.3" y="23.3" font-size="7" fill="#7a3ea8" font-family="Liberation Sans" letter-spacing="-0.2">ab</text>
 <text x="6.8" y="28.8" font-size="6.6" fill="#2e6fc2" font-family="Liberation Sans" letter-spacing="-0.2">ac</text>
 <path d="M3.5 25.5 L5.2 27 L3.5 28.5" fill="none" stroke="#2e6fc2" stroke-width="0.7"/>
 <path d="M3.5 32 V43.5 L6 41 L8 45.5 L9.5 44.8 L7.5 40.5 H11 Z" fill="#fff" stroke="#6a6a6a" stroke-width="0.8"/>
 <path d="M52 23 L53.5 24.5 L55 23 M42 38 L43.5 39.5 L45 38" fill="none" stroke="#6a6a6a" stroke-width="0.7"/>
</svg>
<div class="rt" style="left:775.8px;top:157.5px;font-size:8.5px;transform:scaleX(0.979);transform-origin:0 0">Find</div>
<div class="rt" style="left:775.8px;top:173.6px;font-size:8.5px;transform:scaleX(0.918);transform-origin:0 0">Replace</div>
<div class="rt" style="left:775.5px;top:189.5px;font-size:8.5px;transform:scaleX(0.964);transform-origin:0 0">Select</div>
<div class="gl" style="left:778.8px;top:206.2px;font-size:8.1px;transform:scaleX(0.918);transform-origin:0 0">Editing</div>
<svg class="a" style="left:880px;top:205px" width="16" height="10"><path d="M3 8 L8 3 L13 8" fill="none" stroke="#444" stroke-width="1"/></svg>

<!-- slide -->
<div class="a" style="left:199px;top:221px;width:594px;height:334px;background:#f4c82e"></div>
<div class="a" style="left:236px;top:257px;width:160px;height:19px;background:#4b2219"></div>
<div class="a" style="left:236px;top:257px;width:20px;height:215px;background:#4b2219"></div>
<div class="a" style="left:736px;top:303px;width:20px;height:214px;background:#4b2219"></div>
<div class="a" style="left:596px;top:499px;width:160px;height:18px;background:#4b2219"></div>


<!-- thumbnails pane -->
<div class="a" style="left:91.5px;top:217px;width:11px;height:346px;background:#dadada"></div>
<div class="a" style="left:91.5px;top:217px;width:11px;height:11px;background:#fff;border-bottom:1px solid #e0e0e0"></div>
<svg class="a" style="left:91.5px;top:217px" width="11" height="11"><path d="M2.5 7 L5.5 4 L8.5 7Z" fill="#555"/></svg>
<div class="a" style="left:91.5px;top:229px;width:11px;height:117px;background:#fff"></div>
<div class="a" style="left:91.5px;top:551px;width:11px;height:11px;background:#fff"></div>
<svg class="a" style="left:91.5px;top:551px" width="11" height="11"><path d="M2.5 4 L5.5 7 L8.5 4Z" fill="#555"/></svg>
<div class="a" style="left:104px;top:215px;width:2px;height:348px;background:#d6d6d8"></div>
<!-- right scrollbar -->
<div class="a" style="left:887px;top:217px;width:11px;height:295px;background:#dadada"></div>
<div class="a" style="left:887px;top:217px;width:11px;height:11px;background:#fff"></div>
<svg class="a" style="left:887px;top:217px" width="11" height="11"><path d="M2.5 7 L5.5 4 L8.5 7Z" fill="#555"/></svg>
<div class="a" style="left:887px;top:229px;width:11px;height:13px;background:#fff"></div>
<div class="a" style="left:887px;top:512px;width:11px;height:11px;background:#fff"></div>
<svg class="a" style="left:887px;top:512px" width="11" height="11"><path d="M2.5 4 L5.5 7 L8.5 4Z" fill="#555"/></svg>
<svg class="a" style="left:887px;top:524px" width="11" height="24"><g fill="none" stroke="#555" stroke-width="1.4"><path d="M3 5.5 L5.5 3.2 L8 5.5"/><path d="M3 8.3 L5.5 6 L8 8.3"/><path d="M3 15.8 L5.5 18.1 L8 15.8"/><path d="M3 18.6 L5.5 20.9 L8 18.6"/></g></svg>
<div class="a" style="left:106px;top:561px;width:792px;height:2px;background:#dcdcdc"></div>

<!-- thumb 1 -->
<div class="a" style="left:22px;top:227px;width:58px;height:36px;background:#f6f6f6"></div>
<div class="a" style="left:23px;top:228px;width:56px;height:33.6px;background:#f3c62f;border:2px solid #7a1520"></div>
<div class="a" style="left:25px;top:230px;width:52px;height:29.6px;border:0.6px solid #f7dc7a"></div>
<div class="a" style="left:28.6px;top:233.8px;width:13.3px;height:1.3px;background:#4b2219"></div>
<div class="a" style="left:28.6px;top:233.8px;width:1.4px;height:18px;background:#4b2219"></div>
<div class="a" style="left:72px;top:237.8px;width:1.4px;height:18px;background:#4b2219"></div>
<div class="a" style="left:60px;top:254.5px;width:13.4px;height:1.3px;background:#4b2219"></div>
<div class="a" style="left:34.5px;top:238.6px;width:33px;height:1.3px;background:rgba(40,50,60,.55)"></div>
<div class="a" style="left:34.8px;top:241.1px;width:32.4px;height:1.3px;background:rgba(40,50,60,.55)"></div>
<div class="a" style="left:45.9px;top:243.2px;width:11px;height:1.2px;background:rgba(40,50,60,.5)"></div>
<div class="a" style="left:51px;top:250.5px;width:10.7px;height:1.2px;background:rgba(110,60,30,.5)"></div>
<div class="t" style="left:8.7px;top:227.7px;font-size:10.4px;color:#c43e1c">1</div>
<div class="a" style="left:25.5px;top:274.5px;width:52px;height:29.6px;background:#efebe9;box-shadow:0 0 0 0.6px #d9d4d0;overflow:hidden"><div class="a" style="left:0;top:0;width:1.3px;height:30px;background:#faf8f7"></div><div class="a" style="left:1.3px;top:0;width:1.4px;height:30px;background:#7a5048"></div><div class="a" style="left:4.5px;top:1.5px;width:5px;height:1.3px;background:rgba(60,40,40,.6)"></div><div class="a" style="left:5.5px;top:5.5px;width:41px;height:0.9px;background:rgba(120,110,105,.22)"></div><div class="a" style="left:5.5px;top:6.8px;width:24px;height:0.9px;background:rgba(120,110,105,.22)"></div><div class="a" style="left:5.5px;top:11px;width:41px;height:0.9px;background:rgba(120,110,105,.22)"></div><div class="a" style="left:5.5px;top:12.3px;width:20px;height:0.9px;background:rgba(120,110,105,.22)"></div><div class="a" style="left:5.5px;top:16px;width:41px;height:0.9px;background:rgba(120,110,105,.22)"></div><div class="a" style="left:5.5px;top:17.3px;width:5px;height:0.9px;background:rgba(120,110,105,.22)"></div></div><div class="t" style="left:8.3px;top:273.1px;font-size:10.4px;color:#444">2</div><svg class="a" style="left:6px;top:285.5px" width="9" height="8"><path d="M5 0.5 L6 3 L8.5 3 L6.5 4.6 L7.3 7.3 L5 5.6 L2.7 7.3 L3.5 4.6 L1.5 3 L4 3Z" fill="#555"/><path d="M1 2 V6" stroke="#888" stroke-width="0.6"/></svg><div class="a" style="left:25.5px;top:318.9px;width:52px;height:29.6px;background:#efebe9;box-shadow:0 0 0 0.6px #d9d4d0;overflow:hidden"><div class="a" style="left:0;top:0;width:1.3px;height:30px;background:#faf8f7"></div><div class="a" style="left:1.3px;top:0;width:1.4px;height:30px;background:#7a5048"></div><div class="a" style="left:4.5px;top:2.2px;width:39px;height:1.5px;background:rgba(70,45,45,.45)"></div><div class="a" style="left:4.5px;top:4.7px;width:8px;height:1.5px;background:rgba(70,45,45,.45)"></div><div class="a" style="left:5px;top:8.5px;width:25px;height:0.9px;background:rgba(120,110,105,.22)"></div><div class="a" style="left:5px;top:12.5px;width:41px;height:0.9px;background:rgba(120,110,105,.22)"></div><div class="a" style="left:5px;top:13.8px;width:25px;height:0.9px;background:rgba(120,110,105,.22)"></div><div class="a" style="left:5px;top:17.5px;width:41px;height:0.9px;background:rgba(120,110,105,.22)"></div><div class="a" style="left:5px;top:18.8px;width:18px;height:0.9px;background:rgba(120,110,105,.22)"></div><div class="a" style="left:5px;top:22px;width:30px;height:0.9px;background:rgba(120,110,105,.22)"></div></div><div class="t" style="left:8.3px;top:317.6px;font-size:10.4px;color:#444">3</div><svg class="a" style="left:6px;top:329.9px" width="9" height="8"><path d="M5 0.5 L6 3 L8.5 3 L6.5 4.6 L7.3 7.3 L5 5.6 L2.7 7.3 L3.5 4.6 L1.5 3 L4 3Z" fill="#555"/><path d="M1 2 V6" stroke="#888" stroke-width="0.6"/></svg><div class="a" style="left:25.5px;top:363.4px;width:52px;height:29.6px;background:#efebe9;box-shadow:0 0 0 0.6px #d9d4d0;overflow:hidden"><div class="a" style="left:0;top:0;width:1.3px;height:30px;background:#faf8f7"></div><div class="a" style="left:1.3px;top:0;width:1.4px;height:30px;background:#7a5048"></div><div class="a" style="left:4.5px;top:2.2px;width:39px;height:1.5px;background:rgba(70,45,45,.45)"></div><div class="a" style="left:4.5px;top:4.7px;width:8px;height:1.5px;background:rgba(70,45,45,.45)"></div><div class="a" style="left:5px;top:8.5px;width:25px;height:0.9px;background:rgba(120,110,105,.22)"></div><div class="a" style="left:5px;top:12.5px;width:41px;height:0.9px;background:rgba(120,110,105,.22)"></div><div class="a" style="left:5px;top:13.8px;width:25px;height:0.9px;background:rgba(120,110,105,.22)"></div><div class="a" style="left:5px;top:17.5px;width:41px;height:0.9px;background:rgba(120,110,105,.22)"></div><div class="a" style="left:5px;top:18.8px;width:18px;height:0.9px;background:rgba(120,110,105,.22)"></div><div class="a" style="left:5px;top:22px;width:30px;height:0.9px;background:rgba(120,110,105,.22)"></div></div><div class="t" style="left:8.3px;top:362.0px;font-size:10.4px;color:#444">4</div><svg class="a" style="left:6px;top:374.4px" width="9" height="8"><path d="M5 0.5 L6 3 L8.5 3 L6.5 4.6 L7.3 7.3 L5 5.6 L2.7 7.3 L3.5 4.6 L1.5 3 L4 3Z" fill="#555"/><path d="M1 2 V6" stroke="#888" stroke-width="0.6"/></svg><div class="a" style="left:25.5px;top:407.9px;width:52px;height:29.6px;background:#efebe9;box-shadow:0 0 0 0.6px #d9d4d0;overflow:hidden"><div class="a" style="left:0;top:0;width:1.3px;height:30px;background:#faf8f7"></div><div class="a" style="left:1.3px;top:0;width:1.4px;height:30px;background:#7a5048"></div><div class="a" style="left:4.5px;top:2.2px;width:39px;height:1.5px;background:rgba(70,45,45,.45)"></div><div class="a" style="left:4.5px;top:4.7px;width:8px;height:1.5px;background:rgba(70,45,45,.45)"></div><div class="a" style="left:5px;top:8.5px;width:25px;height:0.9px;background:rgba(120,110,105,.22)"></div><div class="a" style="left:5px;top:12.5px;width:41px;height:0.9px;background:rgba(120,110,105,.22)"></div><div class="a" style="left:5px;top:13.8px;width:25px;height:0.9px;background:rgba(120,110,105,.22)"></div><div class="a" style="left:5px;top:17.5px;width:41px;height:0.9px;background:rgba(120,110,105,.22)"></div><div class="a" style="left:5px;top:18.8px;width:18px;height:0.9px;background:rgba(120,110,105,.22)"></div><div class="a" style="left:5px;top:22px;width:30px;height:0.9px;background:rgba(120,110,105,.22)"></div></div><div class="t" style="left:8.3px;top:406.5px;font-size:10.4px;color:#444">5</div><svg class="a" style="left:6px;top:418.9px" width="9" height="8"><path d="M5 0.5 L6 3 L8.5 3 L6.5 4.6 L7.3 7.3 L5 5.6 L2.7 7.3 L3.5 4.6 L1.5 3 L4 3Z" fill="#555"/><path d="M1 2 V6" stroke="#888" stroke-width="0.6"/></svg><div class="a" style="left:25.5px;top:452.3px;width:52px;height:29.6px;background:#efebe9;box-shadow:0 0 0 0.6px #d9d4d0;overflow:hidden"><div class="a" style="left:0;top:0;width:1.3px;height:30px;background:#faf8f7"></div><div class="a" style="left:1.3px;top:0;width:1.4px;height:30px;background:#7a5048"></div><div class="a" style="left:4.5px;top:2.2px;width:39px;height:1.5px;background:rgba(70,45,45,.45)"></div><div class="a" style="left:4.5px;top:4.7px;width:8px;height:1.5px;background:rgba(70,45,45,.45)"></div><div class="a" style="left:5px;top:8.5px;width:25px;height:0.9px;background:rgba(120,110,105,.22)"></div><div class="a" style="left:5px;top:12.5px;width:41px;height:0.9px;background:rgba(120,110,105,.22)"></div><div class="a" style="left:5px;top:13.8px;width:25px;height:0.9px;background:rgba(120,110,105,.22)"></div><div class="a" style="left:5px;top:17.5px;width:41px;height:0.9px;background:rgba(120,110,105,.22)"></div><div class="a" style="left:5px;top:18.8px;width:18px;height:0.9px;background:rgba(120,110,105,.22)"></div><div class="a" style="left:5px;top:22px;width:30px;height:0.9px;background:rgba(120,110,105,.22)"></div></div><div class="t" style="left:8.3px;top:450.9px;font-size:10.4px;color:#444">6</div><svg class="a" style="left:6px;top:463.3px" width="9" height="8"><path d="M5 0.5 L6 3 L8.5 3 L6.5 4.6 L7.3 7.3 L5 5.6 L2.7 7.3 L3.5 4.6 L1.5 3 L4 3Z" fill="#555"/><path d="M1 2 V6" stroke="#888" stroke-width="0.6"/></svg><div class="a" style="left:25.5px;top:496.8px;width:52px;height:29.6px;background:#efebe9;box-shadow:0 0 0 0.6px #d9d4d0;overflow:hidden"><div class="a" style="left:0;top:0;width:1.3px;height:30px;background:#faf8f7"></div><div class="a" style="left:1.3px;top:0;width:1.4px;height:30px;background:#7a5048"></div><div class="a" style="left:4.5px;top:2.2px;width:39px;height:1.5px;background:rgba(70,45,45,.45)"></div><div class="a" style="left:4.5px;top:4.7px;width:8px;height:1.5px;background:rgba(70,45,45,.45)"></div><div class="a" style="left:5px;top:8.5px;width:25px;height:0.9px;background:rgba(120,110,105,.22)"></div><div class="a" style="left:5px;top:12.5px;width:41px;height:0.9px;background:rgba(120,110,105,.22)"></div><div class="a" style="left:5px;top:13.8px;width:25px;height:0.9px;background:rgba(120,110,105,.22)"></div><div class="a" style="left:5px;top:17.5px;width:41px;height:0.9px;background:rgba(120,110,105,.22)"></div><div class="a" style="left:5px;top:18.8px;width:18px;height:0.9px;background:rgba(120,110,105,.22)"></div><div class="a" style="left:5px;top:22px;width:30px;height:0.9px;background:rgba(120,110,105,.22)"></div></div><div class="t" style="left:8.3px;top:495.4px;font-size:10.4px;color:#444">7</div><svg class="a" style="left:6px;top:507.8px" width="9" height="8"><path d="M5 0.5 L6 3 L8.5 3 L6.5 4.6 L7.3 7.3 L5 5.6 L2.7 7.3 L3.5 4.6 L1.5 3 L4 3Z" fill="#555"/><path d="M1 2 V6" stroke="#888" stroke-width="0.6"/></svg><div class="a" style="left:25.5px;top:541.2px;width:52px;height:20.3px;background:#efebe9;box-shadow:0 0 0 0.6px #d9d4d0;overflow:hidden"><div class="a" style="left:0;top:0;width:1.3px;height:30px;background:#faf8f7"></div><div class="a" style="left:1.3px;top:0;width:1.4px;height:30px;background:#7a5048"></div><div class="a" style="left:4.5px;top:2.2px;width:39px;height:1.5px;background:rgba(70,45,45,.45)"></div><div class="a" style="left:4.5px;top:4.7px;width:8px;height:1.5px;background:rgba(70,45,45,.45)"></div><div class="a" style="left:5px;top:8.5px;width:25px;height:0.9px;background:rgba(120,110,105,.22)"></div><div class="a" style="left:5px;top:12.5px;width:41px;height:0.9px;background:rgba(120,110,105,.22)"></div><div class="a" style="left:5px;top:13.8px;width:25px;height:0.9px;background:rgba(120,110,105,.22)"></div><div class="a" style="left:5px;top:17.5px;width:41px;height:0.9px;background:rgba(120,110,105,.22)"></div><div class="a" style="left:5px;top:18.8px;width:18px;height:0.9px;background:rgba(120,110,105,.22)"></div><div class="a" style="left:5px;top:22px;width:30px;height:0.9px;background:rgba(120,110,105,.22)"></div></div><div class="t" style="left:8.3px;top:539.8px;font-size:10.4px;color:#444">8</div><svg class="a" style="left:6px;top:552.2px" width="9" height="8"><path d="M5 0.5 L6 3 L8.5 3 L6.5 4.6 L7.3 7.3 L5 5.6 L2.7 7.3 L3.5 4.6 L1.5 3 L4 3Z" fill="#555"/><path d="M1 2 V6" stroke="#888" stroke-width="0.6"/></svg>
<!-- slide text -->
<div class="t" style="left:199px;width:594px;top:306px;text-align:center;font-family:'Liberation Serif',serif;font-weight:bold;font-size:20.1px;line-height:23.7px;color:#0f2c4e;-webkit-text-stroke:0.35px #0f2c4e;white-space:normal">STATUSI I GRAVE NË PUNËSIM DHE NË<br>ARSIMIN &amp; FORMIMIN PROFESIONAL<br>NË SHQIPËRI</div>
<div class="t" style="left:495px;top:452.3px;font-size:13px;letter-spacing:0.5px;font-weight:bold;color:#4b2219">Mirela Arqimandriti</div>
<svg class="a" style="left:363px;top:443px" width="10" height="14"><path d="M0.5 0.5 V11 L3 8.7 L5 12.8 L6.6 12 L4.7 8.2 H8 Z" fill="#fff" stroke="#222" stroke-width="0.8"/></svg>

<!-- status bar -->
<div class="st" style="left:4.7px;top:567.3px;font-size:7.9px;transform:scaleX(0.925);transform-origin:0 0">Slide 1 of 21</div>
<svg class="a" style="left:58px;top:564px" width="14" height="12"><g fill="none" stroke="#666" stroke-width="0.8"><path d="M1.5 2 H6 V10 H1.5Z M6 2 H11 V10 H6"/><path d="M8 5 L10 7 M10 5 L8 7" stroke="#444"/></g></svg>
<div class="st" style="left:80.0px;top:567.3px;font-size:7.9px;transform:scaleX(0.914);transform-origin:0 0">English (United States)</div>
<svg class="a" style="left:164px;top:564px" width="12" height="13"><g fill="none" stroke="#555" stroke-width="0.9"><path d="M6 1.5 A4.5 4.5 0 1 0 9.5 8"/><path d="M5 6 L10 11 M10 6 L5 11"/></g></svg>
<div class="st" style="left:176.0px;top:567.3px;font-size:7.9px;transform:scaleX(0.908);transform-origin:0 0">Accessibility: Investigate</div>
<svg class="a" style="left:545px;top:564px" width="10" height="12"><g stroke="#888" stroke-width="0.8" fill="none"><path d="M1 6 H9 M1 8.5 H9 M1 11 H9"/><path d="M3 4 L5 2 L7 4"/></g></svg>
<div class="st" style="left:556.6px;top:567.3px;font-size:7.9px;transform:scaleX(0.953);transform-origin:0 0">Notes</div>
<svg class="a" style="left:589px;top:564px" width="12" height="12"><path d="M0.5 1 H10.5 V8 H4 L1.5 10.5 V8 H0.5Z" fill="#555"/></svg>
<div class="st" style="left:601.4px;top:567.3px;font-size:7.9px;transform:scaleX(0.939);transform-origin:0 0">Comments</div>
<div class="a" style="left:650px;top:563px;width:27.5px;height:15px;background:#c6c6c6"></div>
<svg class="a" style="left:0;top:555px" width="900" height="30">
 <g fill="none" stroke="#7a7a7a" stroke-width="0.9">
  <rect x="659.5" y="11" width="9" height="9"/><path d="M661.5 13 V18 M663.5 13 H666.5 V16 H663.5"/>
  <rect x="687.5" y="11" width="4" height="4"/><rect x="693" y="11" width="4" height="4"/><rect x="687.5" y="16.5" width="4" height="4"/><rect x="693" y="16.5" width="4" height="4"/>
  <path d="M715.5 11.5 H720 V20 H715.5Z M720 11.5 H724.5 V20 H720"/><path d="M716.5 14 H719 M721 14 H723.5 M716.5 16 H719 M721 16 H723.5" stroke-width="0.6"/>
  <path d="M743.5 11 H753.5 M744.5 11 V16.5 H752.5 V11 M748.5 16.5 V20.5 M746.5 20.5 H750.5"/>
  <path d="M766.5 15.5 H771.5"/>
  <path d="M850.5 13 V18 M848 15.5 H853"/>
  <rect x="887.5" y="11.5" width="7.5" height="8"/>
 </g>
 <path d="M889 13 L890.5 14.5 M893.5 13 L892 14.5 M889 18 L890.5 16.5 M893.5 18 L892 16.5" stroke="#7a7a7a" stroke-width="0.7"/>
 <path d="M775 15.5 H844.5" stroke="#555" stroke-width="1.3"/>
 <rect x="796" y="11.5" width="3.8" height="8" fill="#555"/>
 <path d="M810 13.5 V17.5" stroke="#555" stroke-width="1.2"/>
</svg>
<div class="st" style="left:862.1px;top:567.3px;font-size:7.9px;transform:scaleX(0.959);transform-origin:0 0">66%</div>

<!-- taskbar strip -->
<div class="a" style="left:0;top:602.5px;width:900px;height:6px;background:#1d2e36"></div>
<div class="a" style="left:0;top:602.5px;width:35px;height:6px;background:#24404a"></div>
<div class="a" style="left:36px;top:602.5px;width:254px;height:6px;background:#f0f0f0"></div>
<div class="a" style="left:436px;top:602.5px;width:33px;height:6px;background:#4a5a60"></div>
<div class="a" style="left:231px;top:603px;width:4px;height:4px;background:#d070e0;border-radius:50%"></div>
<div class="a" style="left:276px;top:604px;width:3px;height:4px;background:#50c050"></div>

</body></html>
